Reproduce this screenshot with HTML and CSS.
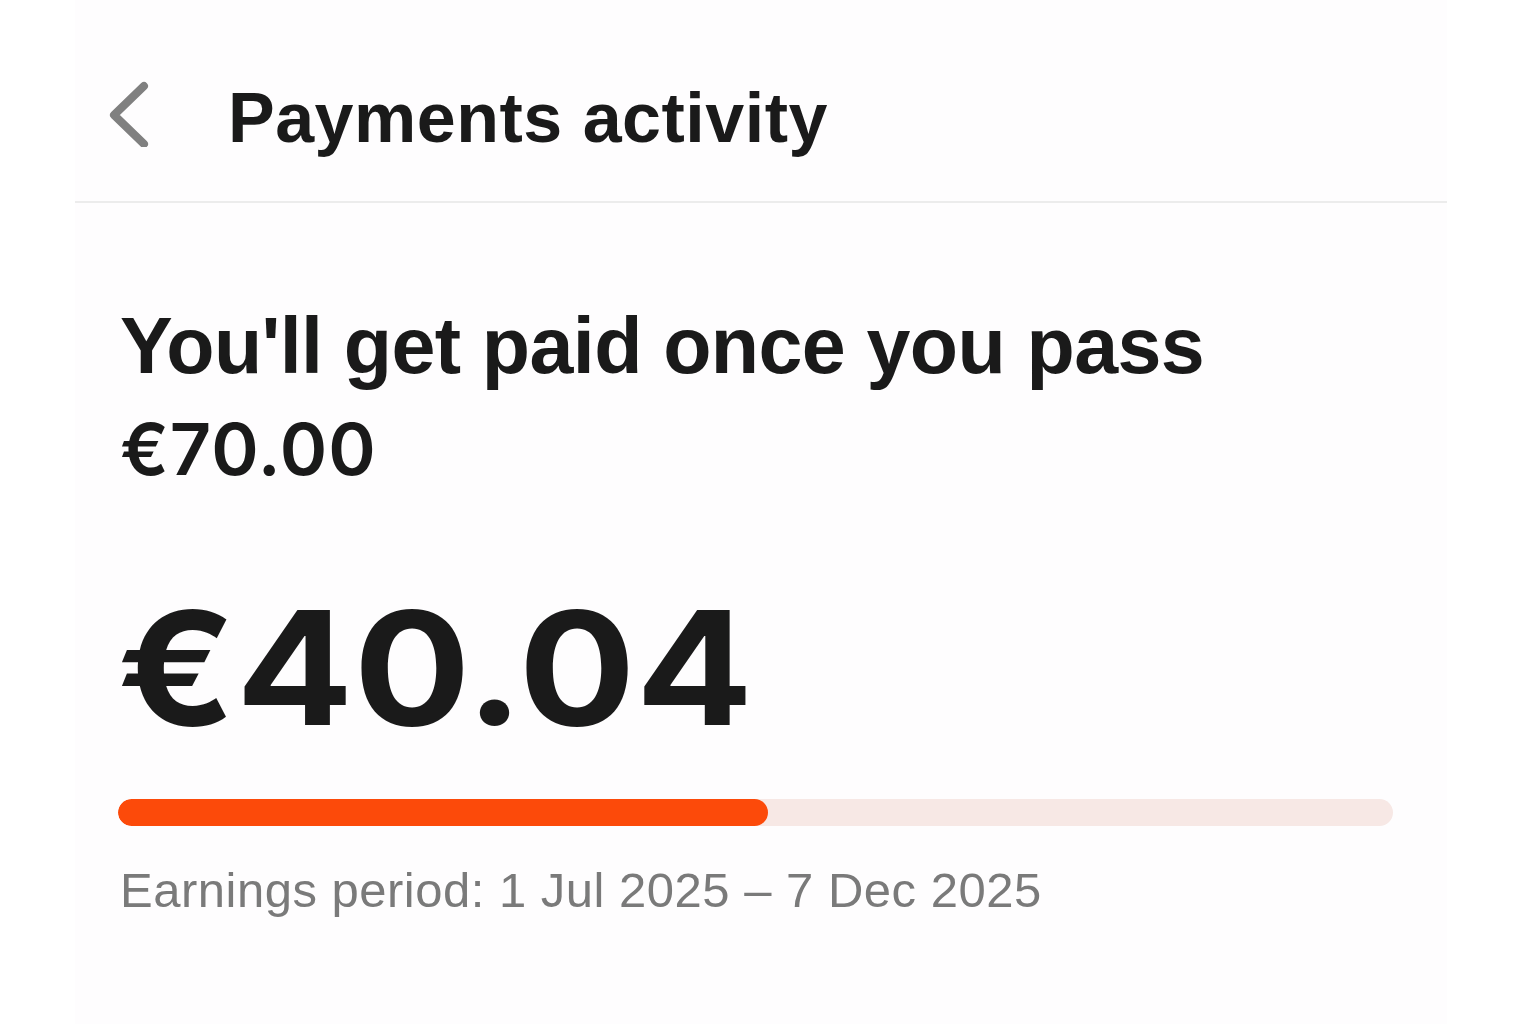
FILE: index.html
```html
<!DOCTYPE html>
<html lang="en">
<head>
    <meta charset="UTF-8">
    <title>Payments activity</title>
    <link rel="stylesheet" href="styles.css">
</head>
<body>

<div class="screen">
    <div class="header">
        <svg class="back" width="42" height="66" viewBox="0 0 42 66">
            <polyline points="36,5 6,34 36,63" fill="none" stroke="#808080" stroke-width="8" stroke-linecap="round" stroke-linejoin="round"/>
        </svg>
        <h1 class="title">Payments activity</h1>
    </div>

    <div class="content">
        <h2 class="heading">You'll get paid once you pass</h2>
        <p class="target">€70.00</p>
        <p class="amount"><span class="amount-text">€40.04</span></p>
        <div class="bar">
            <div class="bar-fill" style="width: 51%"></div>
        </div>
        <p class="period">Earnings period: 1 Jul 2025 – 7 Dec 2025</p>
    </div>
</div>

</body>
</html>
```

FILE: styles.css
```css
body {
    margin: 0;
    background-color: #ffffff;
    font-family: "Liberation Sans", Arial, sans-serif;
    color: #1a1a1a;
}
.screen {
    width: 1372px;
    margin-left: 75px;
    min-height: 1024px;
    background-color: #fefdfe;
}
.header {
    display: flex;
    align-items: center;
    padding: 78px 0 43px 33px;
    border-bottom: 2px solid #ececec;
}
.back {
    margin-top: -8px;
    margin-right: 78px;
}
.title {
    margin: 0;
    font-size: 70px;
    line-height: 80px;
    font-weight: 700;
    letter-spacing: 0.5px;
}
.content {
    padding: 96px 0 0 45px;
}
.heading {
    margin: 0;
    font-size: 79px;
    line-height: 94px;
    font-weight: 700;
    letter-spacing: -0.6px;
}
.target {
    margin: 12px 0 0 0;
    font-family: Inter, sans-serif;
    font-size: 72px;
    line-height: 88px;
    font-weight: 600;
    letter-spacing: 1px;
}
.amount {
    margin: 90px 0 0 -3px;
    font-family: Inter, sans-serif;
    font-size: 158px;
    line-height: 170px;
    font-weight: 700;
}
.amount-text {
    display: inline-block;
    transform: scaleX(1.1);
    transform-origin: left center;
}
.bar {
    margin: 46px 0 0 -2px;
    width: 1275px;
    height: 27px;
    border-radius: 14px;
    background-color: #f7e8e5;
    overflow: hidden;
}
.bar-fill {
    height: 100%;
    border-radius: 14px;
    background-color: #fc4a0a;
}
.period {
    margin: 36px 0 0 0;
    font-size: 49px;
    line-height: 56px;
    color: #7a7a7a;
    letter-spacing: 0.5px;
}
```
